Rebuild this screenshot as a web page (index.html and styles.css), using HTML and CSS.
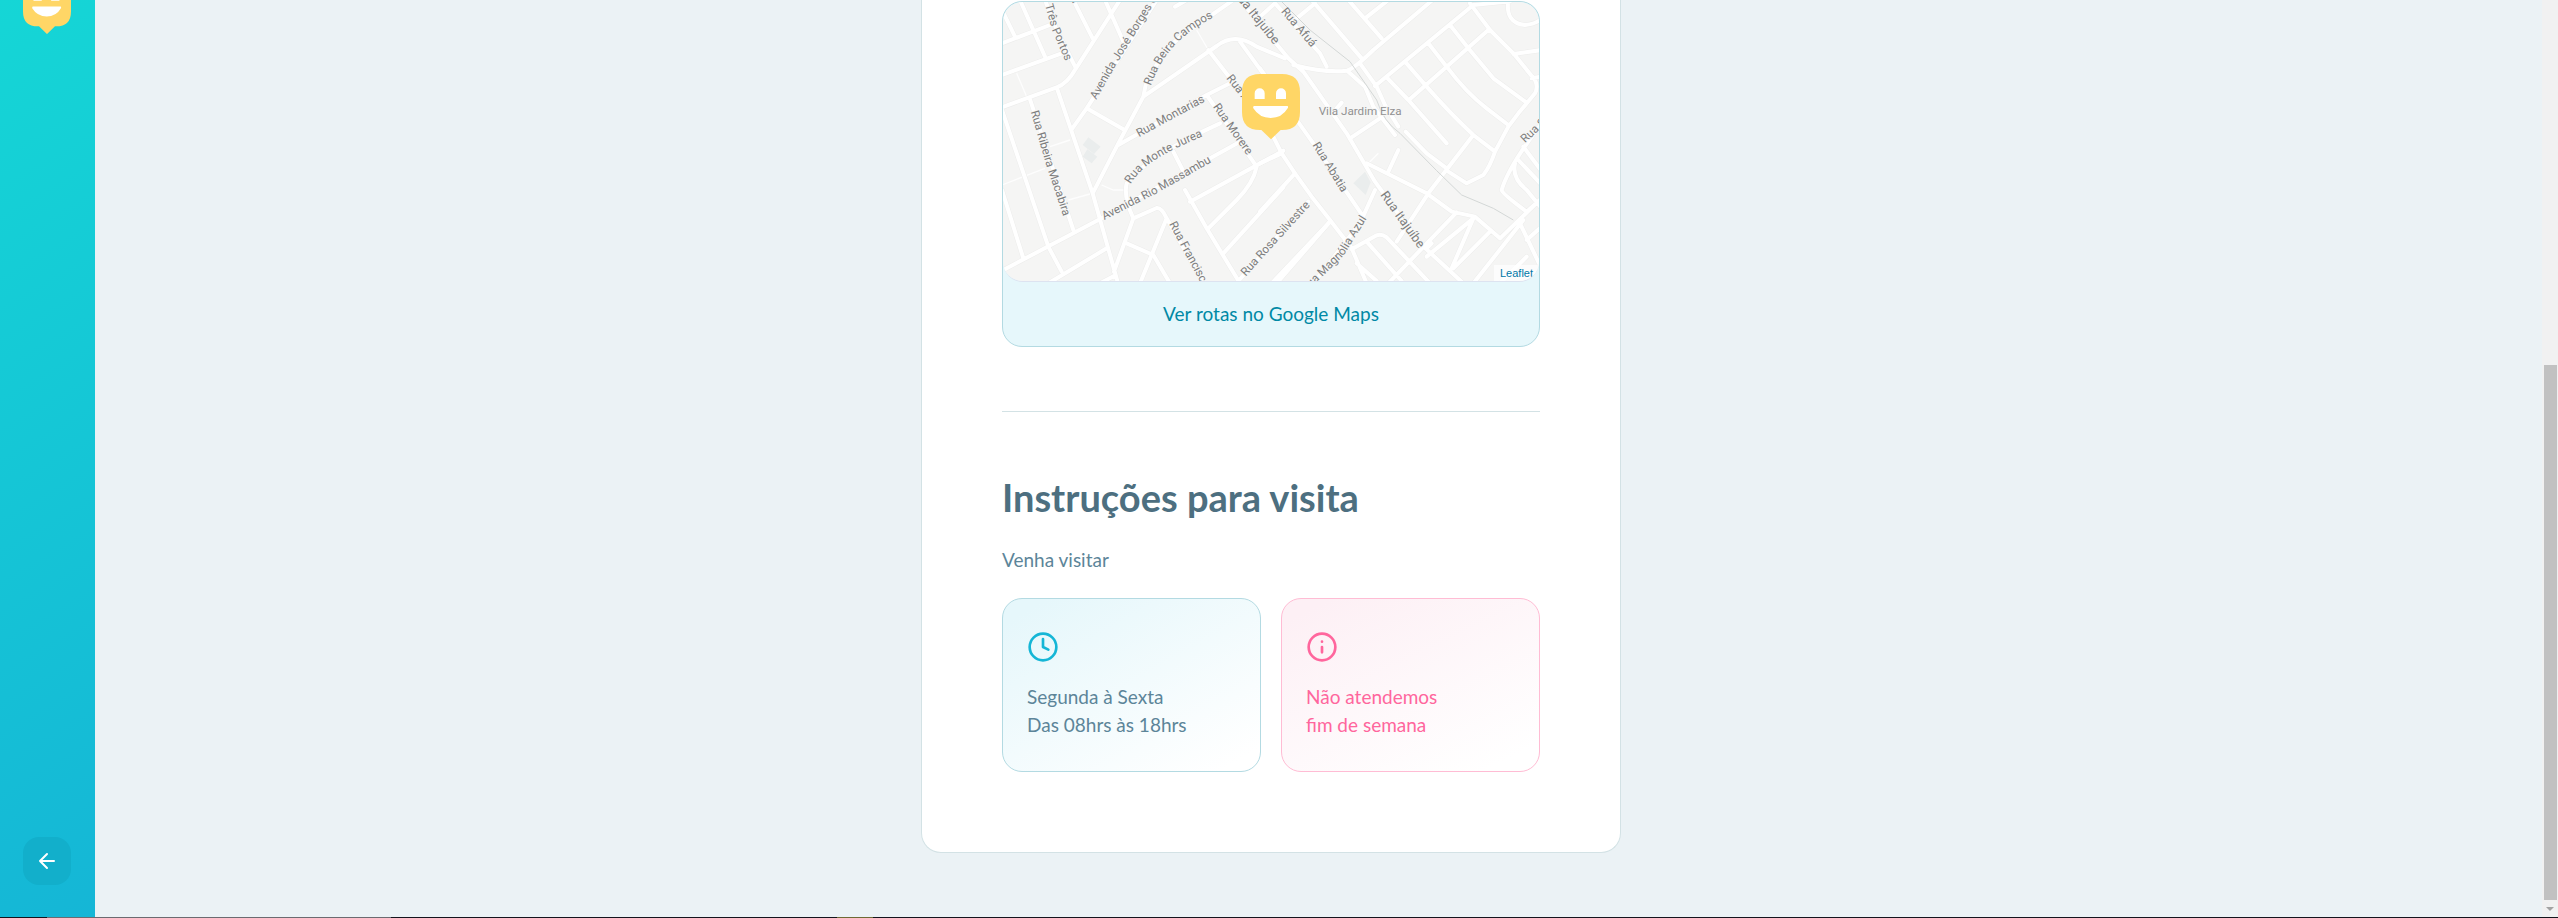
FILE: index.html
```html
<!DOCTYPE html>
<html lang="pt-BR">
<head>
<meta charset="utf-8">
<title>Instruções para visita</title>
<link rel="stylesheet" href="styles.css">
</head>
<body>
<div class="page">
  <aside class="sidebar">
    <svg class="logo" viewBox="756 222 174 196" aria-hidden="true"><use href="#happy"/></svg>
    <button class="back" type="button" aria-label="Voltar">
      <svg viewBox="0 0 24 24" aria-hidden="true"><path d="M19 12H5M12 19l-7-7 7-7"/></svg>
    </button>
  </aside>

  <main class="content">
    <article class="details">
      <section class="map-box">
        <div class="map">
          <svg class="map-canvas" viewBox="39 6 1608 837" role="img" aria-label="Mapa">
            <defs>
              <g id="happy">
                <path fill="#ffd666" d="M810 222H876Q930 222 930 276V336Q930 390 876 390H872L843 418L814 390H810Q756 390 756 336V276Q756 222 810 222Z"/>
                <path fill="#fff" d="M794 297V280a15 15 0 0 1 30 0V297ZM858 297V280a15 15 0 0 1 30 0V297ZM792 318H892Q896 319 893 325Q876 354 842 354Q808 354 790 325Q788 319 792 318Z"/>
              </g>
              <g id="roads-west">
                <path d="M36 130L180 75M36 30L75 110M90 0L165 170M36 225L215 160M36 322L200 262Q232 252 258 205L390 0M165 0L200 90L258 205M250 0L308 115M345 0L400 125M245 388L290 325L500 0M290 325L400 388M308 580L385 430L460 290L468 250Q530 130 600 90L730 0M460 290L680 138Q735 95 800 140L885 175M750 125L830 235M555 20L590 0M655 150L740 260M385 435L650 285L720 250M650 285L800 500M430 655Q400 590 410 550Q470 470 690 370M36 812L335 655L750 425M585 570L650 685L750 850M600 605L880 452M800 500Q790 550 740 600L655 685M700 760L880 562M745 843L955 605M200 262L308 580L384 850M118 292L250 690M36 330L175 740M36 570L100 775M175 850L350 745M330 850L372 828M430 655L372 815M430 655L500 624Q515 622 530 655L450 850M530 655L640 850M860 850L1020 665"/>
                <path class="narrow" d="M550 455L578 510M175 740L215 815M410 730L490 765L540 850"/>
              </g>
              <g id="roads-east">
                <path d="M0 50L45 10L180 160L200 200M110 55L165 10M155 0L305 175M265 0L365 115M315 55L385 0M265 215L315 260L340 320L405 405M300 190L350 260L375 315L415 380M345 258L640 15L750 4M380 232L445 300L560 430M435 185L500 260Q570 340 640 405L705 455M505 130L560 200Q620 280 680 325L745 375M570 75L625 145L700 235L800 308M630 10L690 90L760 160L825 240Q835 260 825 280L775 340L745 380L705 455Q690 500 670 525L620 550L565 515M450 297L560 200L685 90M760 162L845 150M745 0Q735 70 795 75Q837 70 850 50M437 395L500 460L560 505M640 405L505 580L410 725M320 490L500 580L575 635L645 650L720 715M415 450L385 515M270 415L360 355M230 325L245 308M0 205L160 430L310 650M35 400L65 460L105 520L155 590L210 660L275 745L320 850M0 490L65 460M0 635L105 520M35 850L210 665M345 570L300 670L160 850M275 748L350 706Q365 700 380 712L510 850M320 725L425 843M290 790L350 843M385 850L590 637M500 745L515 730M575 805L640 655M580 805L690 695M500 770L640 655M640 850L790 660M720 850L800 770M815 235L845 230M845 370Q745 500 725 570Q725 580 800 635L850 590M790 440L850 520M775 480L850 560M765 490Q755 535 800 570L845 625M720 715L850 590M780 670L837 790M800 720L845 680"/>
                <path class="avenue" d="M-60 0L85 175L130 215L260 400L345 545L480 730L610 850M100 195Q200 220 260 212Q280 208 340 150L520 -2"/>
              </g>
              <path id="l1" d="M165 15L188 95L250 240"/>
              <path id="l2" d="M319 300L372 205L530 -50"/>
              <path id="l3" d="M482 258C515 170 560 105 690 42"/>
              <path id="l4" d="M679 -80L852 135"/>
              <path id="l5" d="M447 412L560 350L700 276"/>
              <path id="l6" d="M422 553C460 485 550 445 680 392"/>
              <path id="l7" d="M343 660L500 580L700 466"/>
              <path id="l8" d="M668 320L810 522"/>
              <path id="l9" d="M708 235L790 340"/>
              <path id="l10" d="M122 335L170 500L240 710"/>
              <path id="l11" d="M537 672L660 900"/>
              <path id="l12" d="M767 830L990 584"/>
              <path id="l13" d="M872 35L1000 185"/>
              <path id="l14" d="M967 435L1090 635"/>
              <path id="l15" d="M1170 585L1340 822"/>
              <path id="l16" d="M920 905L1060 768L1130 656"/>
              <path id="l17" d="M1605 430L1690 350"/>
              <path id="l18" d="M240 -5L270 50"/>
            </defs>
            <rect class="land" x="0" y="0" width="1700" height="860"/>
            <path class="building" d="M295 412L332 440L312 462L278 435ZM292 448L322 470L305 490L278 470ZM1125 515L1142 547L1127 585L1090 550Z"/>
            <path class="track" d="M80 220L110 290M180 440L240 420M36 555L165 505M235 600L300 582M335 555L370 570H405M620 90L655 150M1130 495L1165 460"/>
            <g class="casing"><use href="#roads-west"/><use href="#roads-east" x="810"/></g>
            <g class="surface"><use href="#roads-west"/><use href="#roads-east" x="810"/></g>
            <path class="rail" d="M870 0L960 90L1080 185L1160 300Q1180 365 1230 400L1340 512L1415 585L1510 625L1570 660"/>
            <g class="street">
              <text><textPath href="#l1">Três Portos</textPath></text>
              <text><textPath href="#l2">Avenida José Borges do</textPath></text>
              <text><textPath href="#l3">Rua Beira Campos</textPath></text>
              <text class="major to-end"><textPath href="#l4" startOffset="100%">Rua Itajuíbe</textPath></text>
              <text><textPath href="#l5">Rua Montarias</textPath></text>
              <text><textPath href="#l6">Rua Monte Jurea</textPath></text>
              <text><textPath href="#l7">Avenida Rio Massambu</textPath></text>
              <text><textPath href="#l8">Rua Morere</textPath></text>
              <text><textPath href="#l9">Rua A</textPath></text>
              <text><textPath href="#l10">Rua Ribeira Macabira</textPath></text>
              <text><textPath href="#l11">Rua Francisco</textPath></text>
              <text><textPath href="#l12">Rua Rosa Silvestre</textPath></text>
              <text><textPath href="#l13">Rua Afuá</textPath></text>
              <text><textPath href="#l14">Rua Abatia</textPath></text>
              <text class="major"><textPath href="#l15">Rua Itajuíbe</textPath></text>
              <text class="to-end"><textPath href="#l16" startOffset="100%">Rua Magnólia Azul</textPath></text>
              <text><textPath href="#l17">Rua S</textPath></text>
              <text><textPath href="#l18">a</textPath></text>
            </g>
            <text class="district" x="986" y="344">Vila Jardim Elza</text>
            <use href="#happy"/>
          </svg>
          <a class="attribution" href="#leaflet">Leaflet</a>
        </div>
        <footer class="map-footer"><a href="#rotas">Ver rotas no Google Maps</a></footer>
      </section>

      <hr class="divider">

      <h2 class="title">Instruções para visita</h2>
      <p class="intro">Venha visitar</p>

      <div class="cards">
        <div class="card hours">
          <svg viewBox="0 0 24 24" aria-hidden="true"><circle cx="12" cy="12" r="10"/><path d="M12 6v6l4 2"/></svg>
          <p>Segunda à Sexta<br>Das 08hrs às 18hrs</p>
        </div>
        <div class="card closed">
          <svg viewBox="0 0 24 24" aria-hidden="true"><circle cx="12" cy="12" r="10"/><path d="M12 16v-4M12 8h.01"/></svg>
          <p>Não atendemos<br>fim de semana</p>
        </div>
      </div>
    </article>
  </main>

  <div class="scrollbar" aria-hidden="true">
    <div class="thumb"></div>
    <svg class="scroll-down" viewBox="0 0 8 4"><path d="M0 0H8L4 4Z"/></svg>
  </div>
  <div class="taskbar-edge"></div>
</div>
</body>
</html>
```
FILE: styles.css
```css
* { box-sizing: border-box; margin: 0; padding: 0; }

body {
  background: #ebf2f5;
  color: #5c8599;
  font: 400 19px/28px Lato, "Noto Sans", sans-serif;
}

a { color: inherit; text-decoration: none; }

.page {
  display: grid;
  grid-template-columns: 95px 1fr 16px;
  grid-template-rows: 1fr 1px;
  min-height: 100vh;
}

.sidebar {
  display: flex;
  flex-direction: column;
  align-items: center;
  justify-content: space-between;
  padding: 0 24px 32px 23px;
  overflow: hidden;
  background: linear-gradient(329.54deg, #15b6d6 0%, #15d6d6 100%);
}

.logo { width: 48px; margin-top: -20px; }

.back {
  display: grid;
  place-items: center;
  width: 48px;
  height: 48px;
  border: 0;
  border-radius: 16px;
  background: #12afcb;
  cursor: pointer;
}

.back svg {
  width: 24px;
  fill: none;
  stroke: #fff;
  stroke-width: 2;
  stroke-linecap: round;
  stroke-linejoin: round;
}

/* the right padding balances the sidebar so the card sits in the window's centre */
.content { padding: 0 95px 64px 0; }

.details {
  width: 100%;
  max-width: 700px;
  margin: 0 auto;
  padding: 1px 80px 80px;
  border: 1px solid #d3e2e5;
  border-top: 0;
  border-radius: 0 0 20px 20px;
  background: #fff;
}

.map-box {
  overflow: hidden;
  border: 1px solid #b3dae2;
  border-radius: 20px;
  background: #e6f7fb;
}

.map {
  position: relative;
  overflow: hidden;
  border-bottom: 1px solid #dde3f0;
  border-radius: 20px;
}

.map-canvas { display: block; width: 100%; }

.land { fill: #f5f5f4; }
.building { fill: #eaeded; }
.track { fill: none; stroke: #fdfdfd; stroke-width: 4; }
.rail { fill: none; stroke: #d3d7d6; stroke-width: 3; }

.casing, .surface {
  fill: none;
  stroke-linecap: round;
  stroke-linejoin: round;
}

.casing { stroke: #ededec; stroke-width: 15; }
.surface { stroke: #fff; stroke-width: 12; }
.casing .narrow { stroke-width: 10; }
.surface .narrow { stroke-width: 7; }
.casing .avenue { stroke-width: 25; }
.surface .avenue { stroke-width: 22; }

.street, .district {
  font-family: Roboto, sans-serif;
  font-size: 35px;
  font-weight: 400;
  fill: #7d7d7d;
  stroke: #f7f7f6;
  stroke-width: 5;
  paint-order: stroke;
}

.major { font-size: 38px; }
.to-end { text-anchor: end; }
.district { fill: #919191; }

.attribution {
  position: absolute;
  right: 0;
  bottom: 0;
  padding: 0 6px;
  background: rgba(255, 255, 255, .7);
  color: #0078a8;
  font: 11px/16px "Liberation Sans", sans-serif;
}

.map-footer {
  padding: 20px 0;
  color: #0089a5;
  line-height: 24px;
  text-align: center;
}

.divider {
  height: 1px;
  margin: 64px 0;
  border: 0;
  background: #d3e2e5;
}

.title {
  margin-bottom: 28px;
  color: #4d6f80;
  font-size: 38px;
  font-weight: 700;
  line-height: 42px;
}

.cards {
  display: grid;
  grid-template-columns: 1fr 1fr;
  gap: 20px;
  margin-top: 24px;
}

.card {
  padding: 32px 24px;
  border: 1px solid;
  border-radius: 20px;
}

.card svg {
  display: block;
  width: 32px;
  margin-bottom: 20px;
  fill: none;
  stroke-width: 2;
  stroke-linecap: round;
  stroke-linejoin: round;
}

.hours {
  border-color: #b3dae2;
  background: linear-gradient(149.97deg, #e6f7fb 8%, #fff 93%);
}

.hours svg { stroke: #15b6d6; }

.closed {
  border-color: #ffbcd4;
  background: linear-gradient(154.16deg, #fdf0f5 8%, #fff 91%);
  color: #ff669d;
}

.closed svg { stroke: #ff669d; }

.scrollbar {
  display: flex;
  flex-direction: column;
  align-items: center;
  justify-content: flex-end;
  gap: 7px;
  padding-bottom: 6px;
  background: #f1f1f1;
}

.thumb { width: 13px; height: 58.7%; background: #c1c1c1; }
.scroll-down { width: 8px; fill: #a3a3a3; }

.taskbar-edge {
  grid-column: 1 / -1;
  background: linear-gradient(90deg, #14141c 47px, #6b6b70 47px 391px, #14141c 391px 837px, #6e6a35 837px 873px, #14141c 873px);
}
```
